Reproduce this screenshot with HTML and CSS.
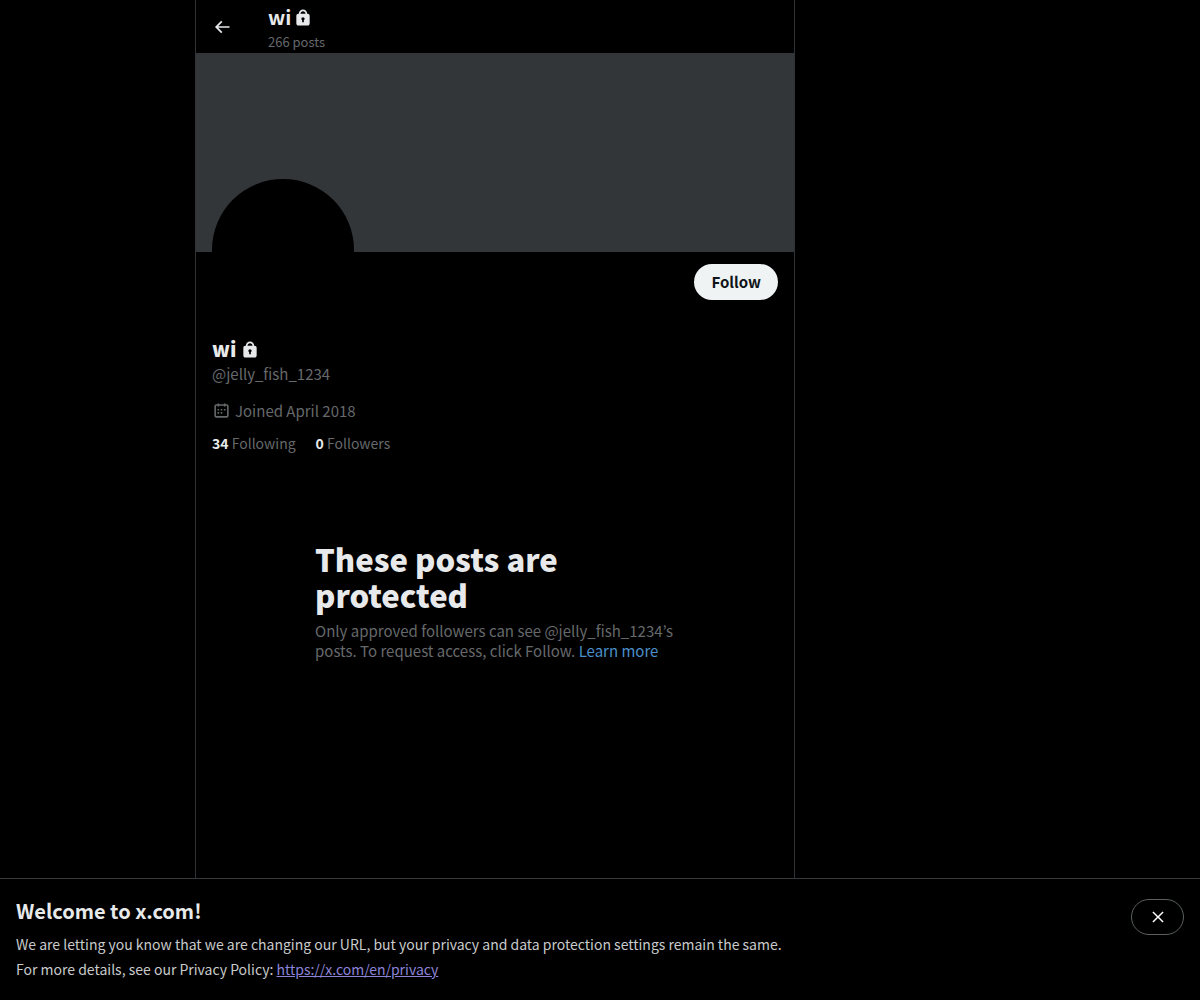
FILE: index.html
```html
<!DOCTYPE html>
<html lang="en">
<head>
<meta charset="utf-8">
<meta name="viewport" content="width=device-width, initial-scale=1">
<title>wi (@jelly_fish_1234) / X</title>
<link rel="stylesheet" href="styles.css">
</head>
<body>
<svg width="0" height="0" class="sprite" aria-hidden="true">
    <symbol id="lock" viewBox="0 0 24 24">
        <path d="M17.5 7H17v-.25c0-2.76-2.24-5-5-5s-5 2.24-5 5V7h-.5C5.12 7 4 8.12 4 9.5v9C4 19.88 5.12 21 6.500 21h11c1.39 0 2.500-1.12 2.500-2.500v-9C20 8.120 18.890 7 17.500 7zM13 14.730V17h-2v-2.270c-.590-.340-1-.990-1-1.730 0-1.100.900-2 2-2 1.110 0 2 .900 2 2 0 .740-.400 1.390-1 1.730zM15 7H9v-.250c0-1.650 1.350-3 3-3 1.660 0 3 1.350 3 3V7z"/>
    </symbol>
</svg>
<div class="layout">
    <main class="column">
        <header class="topbar">
            <button type="button" class="back" aria-label="Back">
                <svg viewBox="0 0 24 24"><path d="M7.414 13l5.043 5.040-1.414 1.420L3.586 12l7.457-7.460 1.414 1.420L7.414 11H21v2H7.414z"/></svg>
            </button>
            <div>
                <h2 class="name">wi <svg class="lock"><use href="#lock"/></svg></h2>
                <p class="count">266 posts</p>
            </div>
        </header>
        <div class="cover"></div>
        <section class="profile">
            <div class="actions">
                <div class="avatar"></div>
                <button type="button" class="follow">Follow</button>
            </div>
            <h1 class="name profile-name">wi <svg class="lock"><use href="#lock"/></svg></h1>
            <p class="handle">@jelly_fish_1234</p>
            <p class="joined">
                <svg viewBox="0 0 24 24"><path d="M7 4V3h2v1h6V3h2v1h1.500C19.890 4 21 5.120 21 6.500v12c0 1.380-1.110 2.500-2.500 2.500h-13C4.120 21 3 19.880 3 18.500v-12C3 5.120 4.120 4 5.500 4H7zm0 2H5.500c-.270 0-.500.220-.500.500v12c0 .280.230.500.500.500h13c.280 0 .500-.220.500-.500v-12c0-.280-.220-.500-.500-.500H17v1h-2V6H9v1H7V6zm0 6h2v-2H7v2zm0 4h2v-2H7v2zm4-4h2v-2h-2v2zm0 4h2v-2h-2v2zm4-4h2v-2h-2v2z"/></svg>
                Joined April 2018
            </p>
            <p class="stats">
                <span><b>34</b> Following</span>
                <span><b>0</b> Followers</span>
            </p>
        </section>
        <section class="protected">
            <h2>These posts are protected</h2>
            <p>Only approved followers can see @jelly_fish_1234’s posts. To request access, click Follow. <a href="#">Learn more</a></p>
        </section>
    </main>
</div>
<aside class="notice">
    <div>
        <h2>Welcome to x.com!</h2>
        <p>We are letting you know that we are changing our URL, but your privacy and data protection settings remain the same.</p>
        <p>For more details, see our Privacy Policy: <a href="https://x.com/en/privacy">https://x.com/en/privacy</a></p>
    </div>
    <button type="button" class="close" aria-label="Close">
        <svg viewBox="0 0 24 24"><path d="M10.590 12L4.540 5.960l1.420-1.420L12 10.590l6.040-6.050 1.420 1.420L13.410 12l6.050 6.040-1.420 1.420L12 13.410l-6.040 6.050-1.420-1.420L10.590 12z"/></svg>
    </button>
</aside>
</body>
</html>
```

FILE: styles.css
```css
* {
    box-sizing: border-box;
}
body {
    margin: 0;
    background: #000;
    color: #e7e9ea;
    font-family: "Noto Sans CJK JP", "Noto Sans", sans-serif;
    font-size: 15px;
    line-height: 20px;
}
h1, h2, p {
    margin: 0;
}
button {
    font: inherit;
    color: inherit;
    cursor: pointer;
}
svg {
    fill: currentColor;
}
a {
    color: #4a8fcb;
    text-decoration: none;
}
.sprite {
    position: absolute;
}

.layout {
    max-width: 810px;
    margin: 0 auto;
}
.column {
    max-width: 600px;
    min-height: 100vh;
    padding-bottom: 122px;
    border: solid #2f3336;
    border-width: 0 1px;
}

/* top bar */
.topbar {
    display: flex;
    align-items: center;
    height: 53px;
    padding: 0 16px;
}
.back {
    display: flex;
    width: 56px;
    padding: 0;
    border: 0;
    background: none;
}
.back svg {
    width: 20px;
    height: 20px;
}
.name {
    display: flex;
    align-items: center;
    gap: 2px;
    font-size: 20px;
    line-height: 30px;
    font-weight: 700;
}
.lock {
    width: 20px;
    height: 20px;
    margin-top: 2px;
}
.count {
    color: #66696b;
    font-size: 13px;
    line-height: 20px;
}

/* profile */
.cover {
    aspect-ratio: 3 / 1;
    background: #333639;
}
.profile {
    padding: 12px 16px;
}
.actions {
    display: flex;
    justify-content: space-between;
    align-items: flex-start;
}
.avatar {
    width: 25%;
    aspect-ratio: 1;
    margin-top: -15%;
    border-radius: 50%;
    background: #000;
}
.follow {
    height: 36px;
    padding: 0 17px;
    border: 0;
    border-radius: 18px;
    background: #eff3f4;
    color: #0f1419;
    font-weight: 700;
}
.profile-name {
    gap: 4px;
    margin-top: 13px;
    font-weight: 900;
}
.handle, .joined, .stats {
    color: #66696b;
}
.joined {
    display: flex;
    align-items: center;
    gap: 4px;
    margin: 17px 0 12px;
}
.joined svg {
    width: 19px;
    height: 19px;
}
.stats {
    display: flex;
    gap: 20px;
    font-size: 14px;
}
.stats b {
    color: #e7e9ea;
}

/* protected posts */
.protected {
    max-width: 400px;
    margin: 44px auto 0;
    padding: 32px 20px;
    color: #66696b;
}
.protected h2 {
    margin-bottom: 8px;
    color: #e7e9ea;
    font-size: 31px;
    line-height: 36px;
    font-weight: 900;
}

/* bottom notice */
.notice {
    position: fixed;
    right: 0;
    bottom: 0;
    left: 0;
    display: flex;
    justify-content: space-between;
    align-items: flex-start;
    padding: 20px 16px 18px;
    border-top: 1px solid #37393b;
    background: #000;
    color: #c8cacb;
    font-size: 14px;
}
.notice h2 {
    margin-bottom: 9px;
    color: #e7e9ea;
    font-size: 20px;
    line-height: 24px;
}
.notice p {
    line-height: 25px;
}
.notice a {
    color: #8c84d8;
    text-decoration: underline;
}
.close {
    display: flex;
    flex: none;
    align-items: center;
    justify-content: center;
    width: 53px;
    height: 36px;
    padding: 0;
    border: 1px solid #5c6063;
    border-radius: 18px;
    background: none;
    color: #fff;
}
.close svg {
    width: 18px;
    height: 18px;
}
```
